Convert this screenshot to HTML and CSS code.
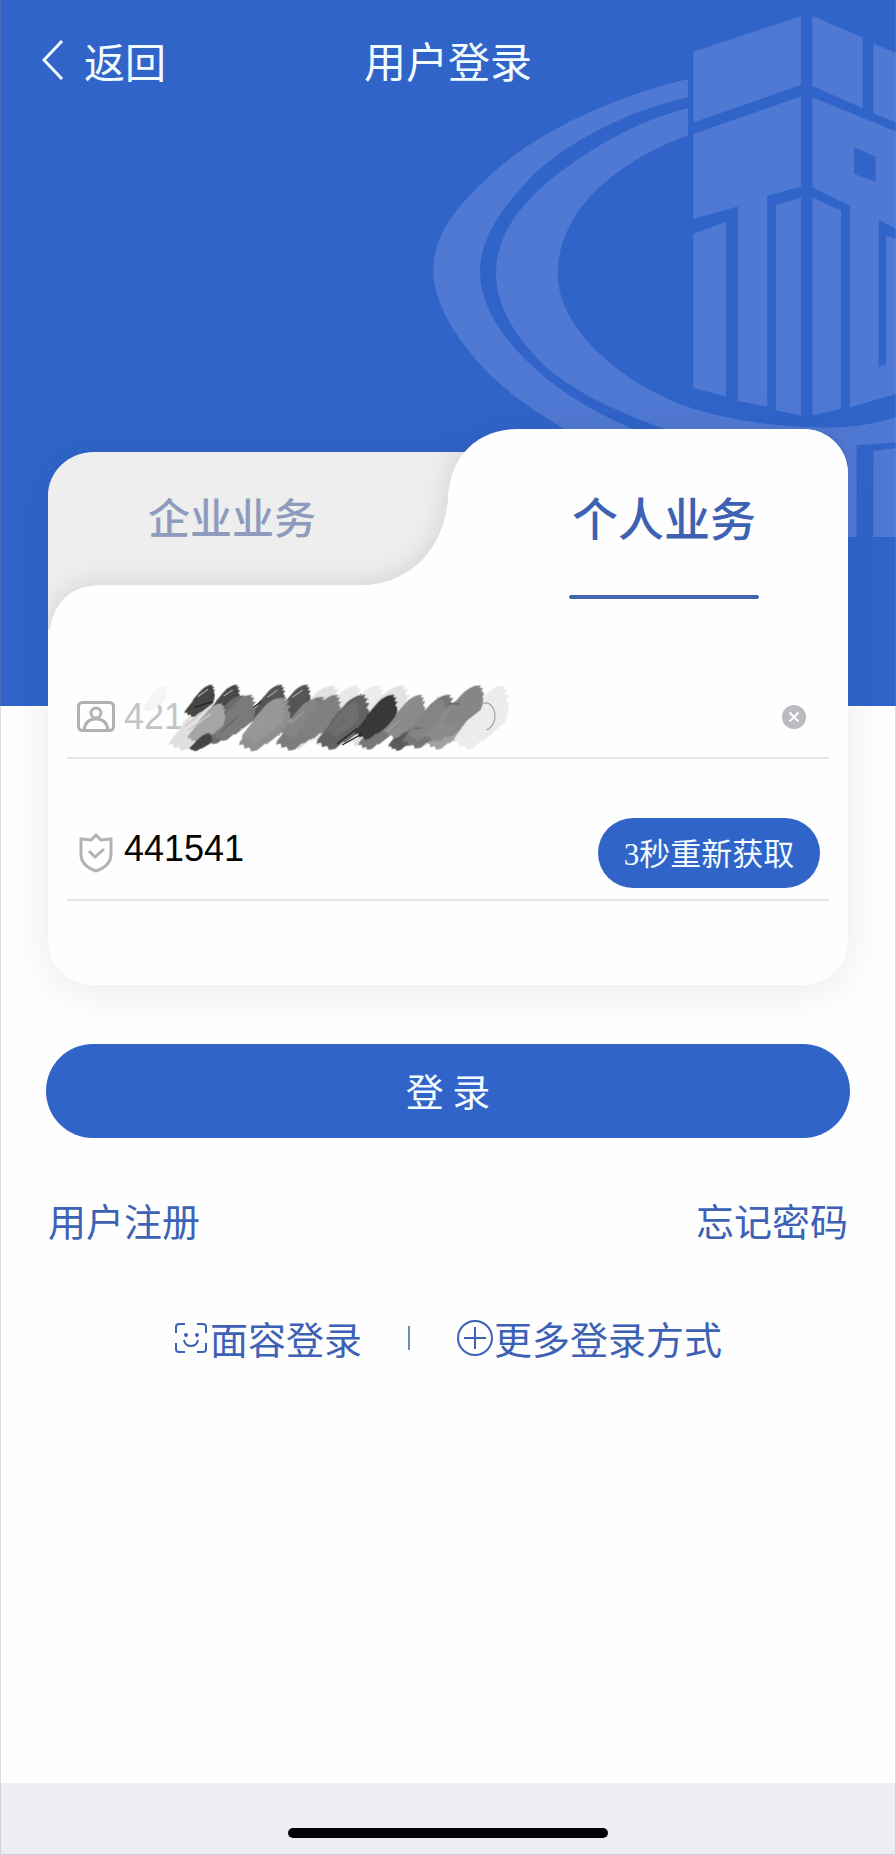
FILE: index.html
```html
<!DOCTYPE html>
<html lang="zh-CN">
<head>
<meta charset="utf-8">
<meta name="viewport" content="width=device-width, initial-scale=1">
<title>用户登录</title>
<link rel="stylesheet" href="styles.css">
</head>
<body>
<div class="screen">
  <header class="hero">
    <svg class="hero-emblem" viewBox="0 0 1428 1976" preserveAspectRatio="none" aria-hidden="true">
      <path d="M804 222C690 244 540 296 430 350C340 394 260 445 200 500C90 594 40 670 40 758C40 850 110 950 200 1040C270 1105 350 1155 450 1210L660 1210C560 1170 470 1125 400 1075C270 980 180 870 180 760C180 670 240 585 340 490C440 400 620 310 804 272Z"/>
      <path d="M804 303C700 325 590 375 500 430C330 530 228 640 228 765C228 880 320 980 400 1045C500 1115 620 1165 760 1210L900 1290L1283 1290L1283 1503L1310 1503L1310 1246L1428 1238L1428 1168C1340 1195 1250 1200 1160 1195C1030 1190 900 1170 800 1138C600 1070 413 920 413 765C413 620 540 470 804 378Z"/>
      <path d="M1360 1262L1428 1254V1503H1360Z"/>
      <path d="M820 145L1143 45V238L820 343Z"/>
      <path d="M1177 45L1328 105V303L1177 240Z"/>
      <path d="M1360 122L1428 148V343L1360 317Z"/>
      <path d="M820 375L1143 270V522L1042 548V1138L953 1122V578L820 613Z"/>
      <path d="M820 655L918 620V1110L820 1085Z"/>
      <path d="M1068 575L1143 552V1163L1068 1148Z"/>
      <path d="M1177 552L1263 590V1145L1177 1163Z"/>
      <path fill-rule="evenodd" d="M1177 272L1428 368V640L1376 615V1027L1398 1020V660L1428 668V1103L1290 1140V575L1177 525ZM1302 413V487L1367 508V438Z"/>
    </svg>
    <nav class="navbar">
      <a class="back" href="#">
        <svg class="back-icon" viewBox="0 0 22 42" aria-hidden="true"><path d="M20 2L2 21L20 40"/></svg>
        <span>返回</span>
      </a>
      <h1 class="title">用户登录</h1>
    </nav>
  </header>

  <main class="content">
    <section class="card">
      <svg class="card-shape" viewBox="0 0 800 555" preserveAspectRatio="none" aria-hidden="true">
        <defs>
          <clipPath id="folder"><path d="M0 67Q0 23 46 23H419L480 0H756Q800 0 800 44V511C800 535 780 555 756 555H44C20 555 0 535 0 511Z"/></clipPath>
        </defs>
        <path class="shape-back" d="M0 67C0 43 20 23 46 23H500V300H800V511C800 535 780 555 756 555H44C20 555 0 535 0 511Z"/>
        <g clip-path="url(#folder)">
          <path class="shape-front" d="M2 200C6 172 24 156 52 156H310C364 156 396 118 400 70C402 26 430 0 470 0H756C780 0 800 20 800 44V555H0V200Z"/>
        </g>
        <path class="shape-top" d="M400 70C402 26 430 0 470 0H756C780 0 800 20 800 44V200H400Z"/>
      </svg>
      <div class="tabs" role="tablist">
        <button class="tab" type="button" role="tab" aria-selected="false">企业业务</button>
        <button class="tab tab-active" type="button" role="tab" aria-selected="true">个人业务</button>
      </div>
      <form class="form" id="login">
        <div class="field">
          <label class="field-icon" for="account">
            <svg width="38" height="32" viewBox="0 0 38 32" role="img" aria-label="账号"><rect x="1.5" y="1.5" width="35" height="28" rx="4"/><circle cx="19" cy="12" r="5"/><path d="M7 29C8 21 13 18 19 18S30 21 31 29"/></svg>
          </label>
          <input class="field-input account" id="account" type="text" value="421">
          <button class="clear" type="button" aria-label="清除">
            <svg width="24" height="24" viewBox="0 0 24 24" aria-hidden="true"><circle cx="12" cy="12" r="12"/><path d="M7.500 7.500L16.500 16.500M16.500 7.500L7.500 16.500"/></svg>
          </button>
          <svg class="scribble" viewBox="250 60 1170 220" aria-hidden="true">
            <defs>
              <path id="brush" d="M0 0L-26 3Q-58 16 -80 44L-116 86L-124 102L-168 158L-172 172L-156 168L-152 184L-134 180L-128 194L-106 190L-78 166L-72 168L0 112Q14 82 12 54L3 47L14 30L-1 28L9 12L-6 12Z"/>
              <filter id="rough" x="-5%" y="-15%" width="110%" height="130%">
                <feTurbulence type="fractalNoise" baseFrequency="0.12" numOctaves="2" seed="4"/>
                <feDisplacementMap in="SourceGraphic" scale="5"/>
              </filter>
            </defs>
            <g filter="url(#rough)">
              <use href="#brush" fill="#f5f5f5" transform="translate(372 76) scale(.4)"/>
              <use href="#brush" fill="#e0e0e0" transform="translate(520 118) scale(.8)"/>
              <use href="#brush" fill="#e2e2e2" transform="translate(885 76)"/>
              <use href="#brush" fill="#e8e8e8" transform="translate(955 76) scale(.9)"/>
              <use href="#brush" fill="#ececec" transform="translate(1022 76) scale(.9)"/>
              <use href="#brush" fill="#e2e2e2" transform="translate(1094 76)"/>
              <use href="#brush" fill="#444" transform="translate(515 74) scale(.5)"/>
              <use href="#brush" fill="#484848" transform="translate(590 74) scale(.55)"/>
              <use href="#brush" fill="#555" transform="translate(725 74) scale(.6)"/>
              <use href="#brush" fill="#555" transform="translate(802 74) scale(.6)"/>
              <use href="#brush" fill="#6c6c6c" transform="translate(610 106) scale(.76)"/>
              <use href="#brush" fill="#7a7a7a" transform="translate(634 104) scale(.72)"/>
              <use href="#brush" fill="#a5a5a5" transform="translate(545 130) scale(.62)"/>
              <use href="#brush" fill="#444" transform="translate(508 220) scale(.38 .28)"/>
              <use href="#brush" fill="#7c7c7c" transform="translate(850 110) scale(.84)"/>
              <use href="#brush" fill="#8f8f8f" transform="translate(738 112) scale(.84)"/>
              <use href="#brush" fill="#979797" transform="translate(722 114) scale(.7)"/>
              <use href="#brush" fill="#858585" transform="translate(825 118) scale(.6)"/>
              <use href="#brush" fill="#808080" transform="translate(892 104) scale(.7)"/>
              <use href="#brush" fill="#626262" transform="translate(975 104) scale(.86)"/>
              <use href="#brush" fill="#6e6e6e" transform="translate(950 125) scale(.55)"/>
              <use href="#brush" fill="#777" transform="translate(1060 150) scale(.62)"/>
              <use href="#brush" fill="#383838" transform="translate(1062 104) scale(.7)"/>
              <use href="#brush" fill="#5a5a5a" transform="translate(1140 165) scale(.56)"/>
              <use href="#brush" fill="#8b8b8b" transform="translate(1146 104) scale(.68)"/>
              <use href="#brush" fill="#a0a0a0" transform="translate(1280 130) scale(.72)"/>
              <use href="#brush" fill="#777" transform="translate(1232 104) scale(.84)"/>
              <use href="#brush" fill="#848484" transform="translate(1210 118) scale(.64)"/>
              <use href="#brush" fill="#868686" transform="translate(1322 76) scale(.8)"/>
              <use href="#brush" fill="#8b8b8b" transform="translate(1270 118) scale(.66)"/>
              <use href="#brush" fill="#ececec" transform="translate(1395 76) scale(.9 1)"/>
              <use href="#brush" fill="#868686" transform="translate(1322 76) scale(.66)"/>
            </g>
            <g fill="none" stroke-width="4">
              <path stroke="#222" d="M460 142L514 126M638 142L662 124M890 252L950 206M905 256L965 222"/>
              <path stroke="#c9c9c9" d="M430 200L480 160M440 212L510 162"/>
              <path stroke="#9c9c9c" d="M470 110L500 88M548 108L575 90M680 112L710 90M755 112L786 90M640 215L680 170M750 190L790 155M1040 215L1080 180"/>
              <path stroke="#a5a5a5" d="M1325 133C1350 118 1370 150 1364 180Q1358 204 1340 210"/>
              <path stroke="#666" d="M540 215L590 170M850 235L910 180M1120 205H1145M1225 132H1260"/>
            </g>
          </svg>
        </div>
        <div class="field field-code">
          <label class="field-icon" for="code">
            <svg width="34" height="40" viewBox="0 0 34 40" role="img" aria-label="验证码"><path d="M17 2L12 7L2 6V21C2 30 8 35 17 38C26 35 32 30 32 21V6L22 7Z"/><path d="M10 18L16 24L25 16"/></svg>
          </label>
          <input class="field-input" id="code" type="text" inputmode="numeric" value="441541">
          <button class="resend" type="button">3秒重新获取</button>
        </div>
      </form>
    </section>

    <button class="submit" type="submit" form="login">登 录</button>

    <div class="links">
      <a href="#">用户注册</a>
      <a href="#">忘记密码</a>
    </div>

    <div class="methods">
      <a class="method" href="#">
        <svg width="36" height="34" viewBox="0 0 36 34" aria-hidden="true"><path d="M2 12V6Q2 3 5 3H11M23 3H29Q32 3 32 6V12M32 22V28Q32 31 29 31H23M11 31H5Q2 31 2 28V22M10 19Q11 25 17 25T24 19"/><circle class="dot" cx="12" cy="14" r="2"/><circle class="dot" cx="23" cy="14" r="2"/></svg>
        <span>面容登录</span>
      </a>
      <span class="divider"></span>
      <a class="method" href="#">
        <svg width="38" height="38" viewBox="0 0 38 38" aria-hidden="true"><circle cx="19" cy="19" r="17"/><path d="M8 19H30M19 8V30"/></svg>
        <span>更多登录方式</span>
      </a>
    </div>
  </main>

  <footer class="home-area"><div class="home-bar"></div></footer>
</div>
</body>
</html>
```

FILE: styles.css
```css
:root {
  --blue: #3064c9;
  --link: #3d61b5;
  --line: #e4e4e4;
}

* { box-sizing: border-box; }

body {
  margin: 0;
  background: #fefefe;
  font-family: "Noto Sans CJK SC", sans-serif;
  font-weight: 400;
}

button, input { font: inherit; }

button {
  border: 0;
  padding: 0;
  background: none;
  cursor: pointer;
}

a { color: inherit; text-decoration: none; }

svg { display: block; }

.screen {
  position: relative;
  display: flex;
  flex-direction: column;
  min-height: 100vh;
}

.screen::after {
  content: "";
  position: absolute;
  inset: 0;
  border: 1px solid rgba(140, 140, 150, 0.3);
  border-top: 0;
  pointer-events: none;
}

.hero {
  position: relative;
  height: 706px;
  background: var(--blue);
  color: #f2fbff;
}

.hero-emblem {
  position: absolute;
  top: 0;
  right: 0;
  width: 476px;
  height: 706px;
  fill: #5079d4;
}

.navbar {
  position: relative;
  display: grid;
  grid-template-columns: 1fr auto 1fr;
  align-items: center;
  padding: 30px 42px;
  font-size: 42px;
  line-height: 60px;
}

.back {
  display: flex;
  align-items: center;
  gap: 20px;
  font-size: 41px;
}

.back-icon {
  width: 22px;
  height: 42px;
  fill: none;
  stroke: currentColor;
  stroke-width: 3;
}

.title {
  margin: 0;
  font-size: 42px;
  font-weight: 400;
}

.content {
  position: relative;
  margin-top: -277px;
}

.card {
  position: relative;
  margin: 0 48px;
  padding-bottom: 84px;
}

.card-shape {
  position: absolute;
  inset: 0;
  width: 100%;
  height: 100%;
  overflow: visible;
  filter: drop-shadow(0 6px 20px rgba(0, 0, 0, 0.08));
}

.shape-back { fill: #eeeeee; }

.shape-front {
  fill: #fefefe;
  filter: drop-shadow(0 0 14px rgba(0, 0, 0, 0.12));
}

.shape-top { fill: #fefefe; }

.tabs {
  position: relative;
  display: grid;
  grid-template-columns: 46% 54%;
  align-items: start;
  height: 170px;
}

.tab {
  padding-top: 57px;
  color: #8e9bbd;
  font-size: 42px;
  font-weight: 500;
  line-height: 60px;
}

.tab-active {
  padding-left: 64px;
  color: #3e62b3;
  font-size: 46px;
}

.tab-active::after {
  content: "";
  display: block;
  width: 190px;
  height: 4px;
  margin: 49px auto 0;
  border-radius: 2px;
  background: #4466ae;
}

.form {
  position: relative;
  display: flex;
  flex-direction: column;
  gap: 48px;
  margin: 0 19px;
  padding-top: 78px;
}

.field {
  position: relative;
  display: flex;
  align-items: center;
  gap: 9px;
  height: 82px;
  padding: 0 9px 0 10px;
  border-bottom: 2px solid var(--line);
}

.field-code { height: 94px; }

.field-icon {
  display: flex;
  justify-content: center;
  width: 38px;
  fill: none;
  stroke: #b2b2b2;
  stroke-width: 3;
}

.field-input {
  flex: 1;
  min-width: 0;
  padding: 0;
  border: 0;
  outline: 0;
  background: none;
  color: #050505;
  font-family: "Liberation Sans", sans-serif;
  font-size: 36px;
  line-height: 48px;
}

.field-code .field-input { padding-bottom: 9px; }

.account { color: #c4c4c4; }

.clear {
  margin-right: 14px;
  fill: #b9bbc0;
  stroke: #fff;
}

.clear path { stroke-width: 2; }
.clear circle { stroke: none; }

.scribble {
  position: absolute;
  left: 57px;
  top: 3px;
  width: 390px;
  height: 73px;
  overflow: visible;
  pointer-events: none;
}

.resend {
  width: 222px;
  height: 70px;
  padding-bottom: 3px;
  border-radius: 35px;
  background: var(--blue);
  color: #f2fbff;
  font-family: "Liberation Serif", "Noto Sans CJK SC", serif;
  font-size: 31px;
}

.submit {
  display: block;
  width: calc(100% - 92px);
  height: 94px;
  margin: 59px 46px 0;
  padding-bottom: 4px;
  border-radius: 47px;
  background: var(--blue);
  color: #f2fbff;
  font-size: 38px;
}

.links {
  display: flex;
  justify-content: space-between;
  margin-top: 52px;
  padding: 0 48px;
  color: var(--link);
  font-size: 38px;
  line-height: 60px;
}

.methods {
  display: flex;
  align-items: center;
  justify-content: center;
  gap: 46px;
  margin-top: 58px;
  color: var(--link);
  font-size: 38px;
  line-height: 60px;
}

.method {
  display: flex;
  align-items: center;
  fill: none;
  stroke: currentColor;
  stroke-width: 2;
}

.dot { fill: currentColor; stroke: none; }

.divider {
  width: 2px;
  height: 24px;
  background: #7488b8;
}

.home-area {
  height: 72px;
  margin-top: auto;
  padding-top: 45px;
  background: #eeedf3;
}

.home-bar {
  width: 320px;
  height: 10px;
  margin: 0 auto;
  border-radius: 5px;
  background: #020106;
}
```
